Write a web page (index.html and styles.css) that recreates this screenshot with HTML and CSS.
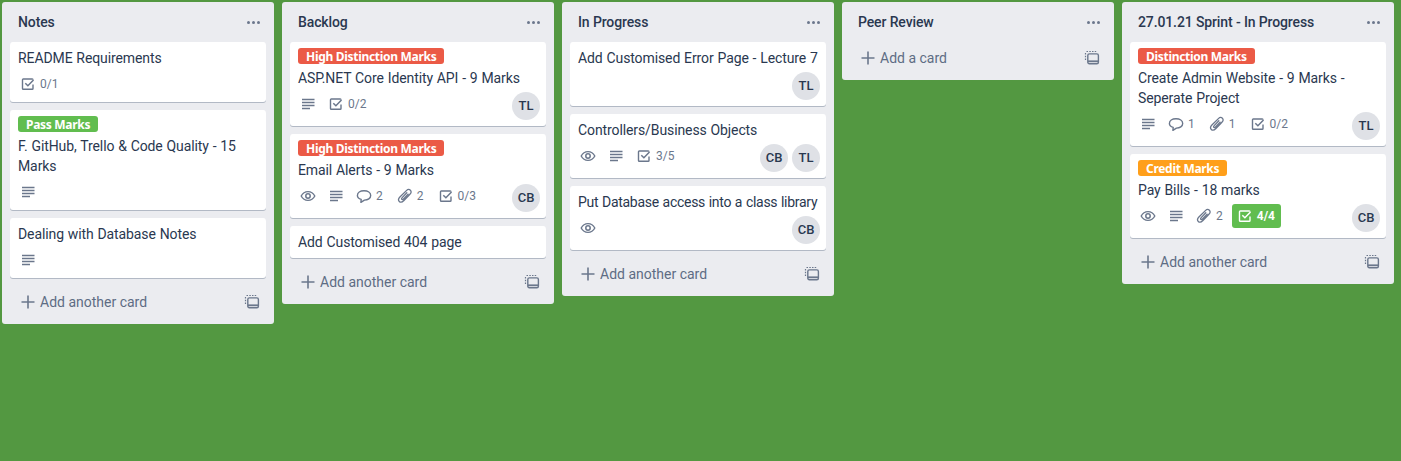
FILE: index.html
```html
<!DOCTYPE html>
<html lang="en">
<head>
    <meta charset="UTF-8">
    <title>Board</title>
    <link rel="stylesheet" href="styles.css">
</head>
<body>
    <svg class="icon-defs" xmlns="http://www.w3.org/2000/svg">
        <symbol id="i-check" viewBox="0 0 20 20">
            <path d="M15 10.500V14.500a.8.8 0 0 1-.8.8H5.300a.8.8 0 0 1-.8-.8V5.800a.8.8 0 0 1 .8-.8h8.900a.8.8 0 0 1 .8.8" fill="none" stroke="currentColor" stroke-width="1.400"/>
            <path d="M7.300 9.200l2.600 2.600 5.600-5.800" fill="none" stroke="currentColor" stroke-width="1.500"/>
        </symbol>
        <symbol id="i-desc" viewBox="0 0 20 20">
            <path d="M4 5.500h12.500M4 8.500h12.500M4 11.500h12.500M4 14.500h8" fill="none" stroke="currentColor" stroke-width="1.400"/>
        </symbol>
        <symbol id="i-eye" viewBox="0 0 20 20">
            <path d="M3.200 10c1.500-2.900 3.900-4.400 6.800-4.400s5.300 1.500 6.800 4.400c-1.500 2.900-3.900 4.400-6.800 4.400S4.700 12.900 3.200 10z" fill="none" stroke="currentColor" stroke-width="1.400"/>
            <circle cx="10" cy="10" r="2.200" fill="none" stroke="currentColor" stroke-width="1.500"/>
        </symbol>
        <symbol id="i-comment" viewBox="0 0 20 20">
            <path d="M10 4.800c3.800 0 6.700 2 6.700 4.700s-2.900 4.600-6.300 4.600l-3.500 2.200.3-2.900C5 12.700 3.400 11.300 3.400 9.500c0-2.700 2.800-4.700 6.600-4.700z" fill="none" stroke="currentColor" stroke-width="1.400" stroke-linejoin="round"/>
        </symbol>
        <symbol id="i-attach" viewBox="0 0 20 20">
            <path d="M7.500 15.800l7.400-7.500c1.500-1.500 1.600-3 .5-4.100-1.100-1-2.700-.9-4 .4L4.900 11c-1.600 1.700-1.700 3.400-.6 4.500 1.100 1.100 2.700 1 4.400-.7l5.300-5.400M11.800 6.800l-4.600 4.800c-.7.700-.8 1.300-.4 1.700.4.400 1 .3 1.700-.4l4.600-4.800" fill="none" stroke="currentColor" stroke-width="1.300" stroke-linecap="round"/>
        </symbol>
        <symbol id="i-plus" viewBox="0 0 20 20">
            <path d="M10 3.500v13M3.500 10h13" fill="none" stroke="currentColor" stroke-width="1.600"/>
        </symbol>
        <symbol id="i-template" viewBox="0 0 16 16">
            <path d="M2.500 1.500h1.500M5.300 1.500h1.500M8 1.500h1.500M10.700 1.500h1.500M1.500 3v1.500M1.500 5.800v1.500M1.500 8.600v1.500" fill="none" stroke="currentColor" stroke-width="1.200"/>
            <rect x="3.800" y="3.900" width="10.600" height="9.800" rx="1.500" fill="none" stroke="currentColor" stroke-width="1.400"/>
            <path d="M4 11.300h10" fill="none" stroke="currentColor" stroke-width="1.800"/>
        </symbol>
    </svg>

    <div class="board">
        <section class="list">
            <header class="list-header">
                <h2>Notes</h2>
                <span class="dots"><i></i><i></i><i></i></span>
            </header>
            <div class="cards">
                <article class="card">
                    <p class="title">README Requirements</p>
                    <div class="footer">
                        <div class="badges">
                            <span class="badge"><svg class="ico"><use href="#i-check"/></svg><b>0/1</b></span>
                        </div>
                    </div>
                </article>
                <article class="card">
                    <span class="label green">Pass Marks</span>
                    <p class="title">F. GitHub, Trello &amp; Code Quality - 15 Marks</p>
                    <div class="footer">
                        <div class="badges">
                            <span class="badge"><svg class="ico"><use href="#i-desc"/></svg></span>
                        </div>
                    </div>
                </article>
                <article class="card">
                    <p class="title">Dealing with Database Notes</p>
                    <div class="footer">
                        <div class="badges">
                            <span class="badge"><svg class="ico"><use href="#i-desc"/></svg></span>
                        </div>
                    </div>
                </article>
            </div>
            <footer class="composer">
                <span class="add"><svg class="ico"><use href="#i-plus"/></svg>Add another card</span>
                <svg class="tpl"><use href="#i-template"/></svg>
            </footer>
        </section>

        <section class="list">
            <header class="list-header">
                <h2>Backlog</h2>
                <span class="dots"><i></i><i></i><i></i></span>
            </header>
            <div class="cards">
                <article class="card">
                    <span class="label red">High Distinction Marks</span>
                    <p class="title">ASP.NET Core Identity API - 9 Marks</p>
                    <div class="footer">
                        <div class="badges">
                            <span class="badge"><svg class="ico"><use href="#i-desc"/></svg></span>
                            <span class="badge"><svg class="ico"><use href="#i-check"/></svg><b>0/2</b></span>
                        </div>
                        <div class="members"><span class="avatar">TL</span></div>
                    </div>
                </article>
                <article class="card">
                    <span class="label red">High Distinction Marks</span>
                    <p class="title">Email Alerts - 9 Marks</p>
                    <div class="footer">
                        <div class="badges">
                            <span class="badge"><svg class="ico"><use href="#i-eye"/></svg></span>
                            <span class="badge"><svg class="ico"><use href="#i-desc"/></svg></span>
                            <span class="badge"><svg class="ico"><use href="#i-comment"/></svg><b>2</b></span>
                            <span class="badge"><svg class="ico"><use href="#i-attach"/></svg><b>2</b></span>
                            <span class="badge"><svg class="ico"><use href="#i-check"/></svg><b>0/3</b></span>
                        </div>
                        <div class="members"><span class="avatar">CB</span></div>
                    </div>
                </article>
                <article class="card">
                    <p class="title">Add Customised 404 page</p>
                </article>
            </div>
            <footer class="composer">
                <span class="add"><svg class="ico"><use href="#i-plus"/></svg>Add another card</span>
                <svg class="tpl"><use href="#i-template"/></svg>
            </footer>
        </section>

        <section class="list">
            <header class="list-header">
                <h2>In Progress</h2>
                <span class="dots"><i></i><i></i><i></i></span>
            </header>
            <div class="cards">
                <article class="card">
                    <p class="title">Add Customised Error Page - Lecture 7</p>
                    <div class="footer">
                        <div class="badges"></div>
                        <div class="members"><span class="avatar">TL</span></div>
                    </div>
                </article>
                <article class="card">
                    <p class="title">Controllers/Business Objects</p>
                    <div class="footer">
                        <div class="badges">
                            <span class="badge"><svg class="ico"><use href="#i-eye"/></svg></span>
                            <span class="badge"><svg class="ico"><use href="#i-desc"/></svg></span>
                            <span class="badge"><svg class="ico"><use href="#i-check"/></svg><b>3/5</b></span>
                        </div>
                        <div class="members"><span class="avatar">CB</span><span class="avatar">TL</span></div>
                    </div>
                </article>
                <article class="card">
                    <p class="title tight">Put Database access into a class library</p>
                    <div class="footer">
                        <div class="badges">
                            <span class="badge"><svg class="ico"><use href="#i-eye"/></svg></span>
                        </div>
                        <div class="members"><span class="avatar">CB</span></div>
                    </div>
                </article>
            </div>
            <footer class="composer">
                <span class="add"><svg class="ico"><use href="#i-plus"/></svg>Add another card</span>
                <svg class="tpl"><use href="#i-template"/></svg>
            </footer>
        </section>

        <section class="list">
            <header class="list-header">
                <h2>Peer Review</h2>
                <span class="dots"><i></i><i></i><i></i></span>
            </header>
            <footer class="composer">
                <span class="add"><svg class="ico"><use href="#i-plus"/></svg>Add a card</span>
                <svg class="tpl"><use href="#i-template"/></svg>
            </footer>
        </section>

        <section class="list">
            <header class="list-header">
                <h2>27.01.21 Sprint - In Progress</h2>
                <span class="dots"><i></i><i></i><i></i></span>
            </header>
            <div class="cards">
                <article class="card">
                    <span class="label red">Distinction Marks</span>
                    <p class="title">Create Admin Website - 9 Marks - Seperate Project</p>
                    <div class="footer">
                        <div class="badges">
                            <span class="badge"><svg class="ico"><use href="#i-desc"/></svg></span>
                            <span class="badge"><svg class="ico"><use href="#i-comment"/></svg><b>1</b></span>
                            <span class="badge"><svg class="ico"><use href="#i-attach"/></svg><b>1</b></span>
                            <span class="badge"><svg class="ico"><use href="#i-check"/></svg><b>0/2</b></span>
                        </div>
                        <div class="members"><span class="avatar">TL</span></div>
                    </div>
                </article>
                <article class="card">
                    <span class="label orange">Credit Marks</span>
                    <p class="title">Pay Bills - 18 marks</p>
                    <div class="footer">
                        <div class="badges">
                            <span class="badge"><svg class="ico"><use href="#i-eye"/></svg></span>
                            <span class="badge"><svg class="ico"><use href="#i-desc"/></svg></span>
                            <span class="badge"><svg class="ico"><use href="#i-attach"/></svg><b>2</b></span>
                            <span class="badge done"><svg class="ico"><use href="#i-check"/></svg><b>4/4</b></span>
                        </div>
                        <div class="members"><span class="avatar">CB</span></div>
                    </div>
                </article>
            </div>
            <footer class="composer">
                <span class="add"><svg class="ico"><use href="#i-plus"/></svg>Add another card</span>
                <svg class="tpl"><use href="#i-template"/></svg>
            </footer>
        </section>
    </div>
</body>
</html>
```

FILE: styles.css
```css
body {
    margin: 0;
    height: 461px;
    overflow: hidden;
    background-color: #539841;
    font-family: Roboto, "Noto Sans", sans-serif;
    font-size: 14px;
    line-height: 20px;
    color: #2a3850;
}
.icon-defs {
    display: none;
}
.board {
    display: flex;
    align-items: flex-start;
    gap: 8px;
    padding: 2px;
}
.list {
    width: 272px;
    flex: none;
    background-color: #ebecf0;
    border-radius: 3px;
    padding-bottom: 6px;
}
.list-header {
    height: 40px;
    display: flex;
    align-items: center;
    justify-content: space-between;
    padding: 0 14px 0 16px;
    box-sizing: border-box;
}
.list-header h2 {
    margin: 0;
    font-size: 14px;
    font-weight: 500;
    letter-spacing: -0.12px;
}
.dots {
    display: flex;
    gap: 2px;
}
.dots i {
    width: 3px;
    height: 3px;
    border-radius: 50%;
    background-color: #6b778c;
}
.cards {
    padding: 0 8px 8px;
}
.card {
    background-color: #fff;
    border-radius: 3px;
    box-shadow: 0 1px 0 rgba(9,30,66,0.25);
    padding: 6px 6px 6px 8px;
    margin-bottom: 8px;
}
.card:last-child {
    margin-bottom: 0;
}
.label {
    display: block;
    width: fit-content;
    height: 16px;
    line-height: 18px;
    padding: 0 8px;
    margin-bottom: 4px;
    border-radius: 3px;
    color: #fff;
    font-family: "Noto Sans", sans-serif;
    font-size: 12px;
    font-weight: 700;
    letter-spacing: -0.3px;
}
.green { background-color: #61bd4f; }
.red { background-color: #eb5a46; }
.orange { background-color: #ff9f1a; }
.title {
    margin: 0;
    letter-spacing: -0.1px;
    word-spacing: 0.5px;
}
.tight {
    letter-spacing: -0.28px;
}
.footer {
    display: flex;
    align-items: flex-start;
    justify-content: space-between;
    margin-top: 4px;
}
.badges {
    display: flex;
    align-items: center;
    gap: 8px;
    height: 24px;
}
.badge {
    display: flex;
    align-items: center;
    height: 24px;
    color: #6b778c;
}
.badge b {
    font-size: 12px;
    font-weight: 400;
    padding: 0 4px 0 2px;
}
.ico {
    width: 20px;
    height: 20px;
    flex: none;
}
.done {
    background-color: #61bd4f;
    color: #fff;
    border-radius: 3px;
    margin-left: -3px;
    padding: 0 2px 0 3px;
}
.done b {
    font-weight: 700;
}
.members {
    display: flex;
    gap: 4px;
}
.avatar {
    width: 28px;
    height: 28px;
    border-radius: 50%;
    background-color: #dfe1e6;
    display: flex;
    align-items: center;
    justify-content: center;
    font-size: 13px;
    font-weight: 500;
}
.composer {
    height: 32px;
    display: flex;
    align-items: center;
    justify-content: space-between;
    padding: 0 14px 0 16px;
    color: #5e6c84;
}
.add {
    display: flex;
    align-items: center;
    gap: 2px;
}
.add .ico {
    color: #6b778c;
}
.tpl {
    width: 16px;
    height: 16px;
    color: #6b778c;
}
```
